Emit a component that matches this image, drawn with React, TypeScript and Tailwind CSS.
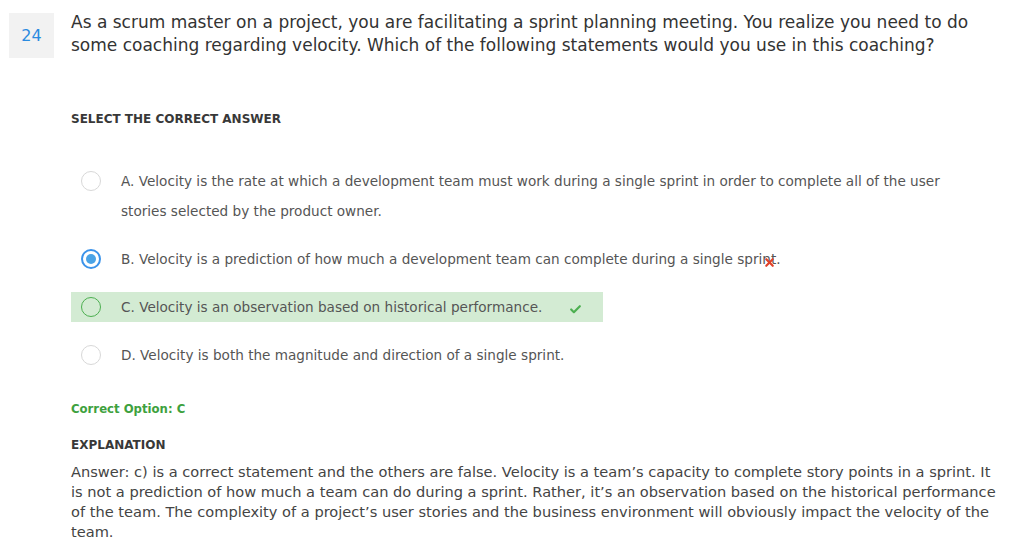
import { Check, X } from "lucide-react";

type Option = {
  key: string;
  text: string;
  state?: "selected" | "correct";
};

const options: Option[] = [
  {
    key: "A",
    text: "Velocity is the rate at which a development team must work during a single sprint in order to complete all of the user stories selected by the product owner.",
  },
  {
    key: "B",
    text: "Velocity is a prediction of how much a development team can complete during a single sprint.",
    state: "selected",
  },
  {
    key: "C",
    text: "Velocity is an observation based on historical performance.",
    state: "correct",
  },
  {
    key: "D",
    text: "Velocity is both the magnitude and direction of a single sprint.",
  },
];

function Radio({ state }: { state?: Option["state"] }) {
  if (state === "selected") {
    return (
      <span className="flex h-[20px] w-[20px] items-center justify-center rounded-full border-2 border-[#3b93ea] bg-white">
        <span className="h-[10px] w-[10px] rounded-full bg-[#4aa3e6]" />
      </span>
    );
  }
  if (state === "correct") {
    return (
      <span className="h-[20px] w-[20px] rounded-full border-[1.5px] border-[#4caf50]" />
    );
  }
  return (
    <span className="h-[20px] w-[20px] rounded-full border border-[#d8d8d8] bg-white" />
  );
}

function OptionRow({ option }: { option: Option }) {
  const correct = option.state === "correct";
  return (
    <div
      className={
        correct
          ? "flex w-[532px] items-start bg-[#d3ebd3] pl-[10px]"
          : "flex items-start pl-[10px]"
      }
    >
      <div className="flex h-[30px] shrink-0 items-center">
        <Radio state={option.state} />
      </div>
      <p className="relative ml-[20px] max-w-[845px] text-[13.6px] leading-[30px] text-[#555]">
        {`${option.key}. ${option.text}`}
        {option.state === "selected" && (
          <X
            className="absolute top-[12px] ml-[-18px] inline text-[#e0412a]"
            size={13}
            strokeWidth={4}
          />
        )}
        {correct && (
          <Check
            className="ml-[27px] inline align-[-4px] text-[#4caf50]"
            size={13}
            strokeWidth={4}
          />
        )}
      </p>
    </div>
  );
}

export default function App() {
  return (
    <div
      className="min-h-[551px] bg-white text-[#333]"
      style={{ fontFamily: '"DejaVu Sans", sans-serif' }}
    >
      <div className="flex items-start pl-[9px] pt-[13px]">
        <div className="flex h-[45px] w-[45px] shrink-0 items-center justify-center bg-[#f2f2f2] text-[16px] text-[#2a8be0]">
          24
        </div>
        <p className="ml-[17px] mt-[-2px] pr-[40px] text-[17px] leading-[23px] text-[#333]">
          As a scrum master on a project, you are facilitating a sprint planning
          meeting. You realize you need to do some coaching regarding velocity.
          Which of the following statements would you use in this coaching?
        </p>
      </div>

      <div className="pl-[71px] pr-[18px]">
        <h3 className="mt-[53px] text-[12px] font-semibold uppercase leading-[16px] text-[#383838]">
          Select the correct answer
        </h3>

        <div className="mt-[39px] flex flex-col gap-[18px]">
          {options.map((o) => (
            <OptionRow key={o.key} option={o} />
          ))}
        </div>

        <p className="mt-[31px] text-[11.7px] font-semibold leading-[16px] text-[#3ea13e]">
          Correct Option: C
        </p>
        <h3 className="mt-[20px] text-[12px] font-semibold uppercase leading-[16px] text-[#383838]">
          Explanation
        </h3>
        <p className="mt-[9px] text-[14.6px] leading-[20px] text-[#444]">
          Answer: c) is a correct statement and the others are false. Velocity
          is a team’s capacity to complete story points in a sprint. It is not a
          prediction of how much a team can do during a sprint. Rather, it’s an
          observation based on the historical performance of the team. The
          complexity of a project’s user stories and the business environment
          will obviously impact the velocity of the team.
        </p>
      </div>
    </div>
  );
}
